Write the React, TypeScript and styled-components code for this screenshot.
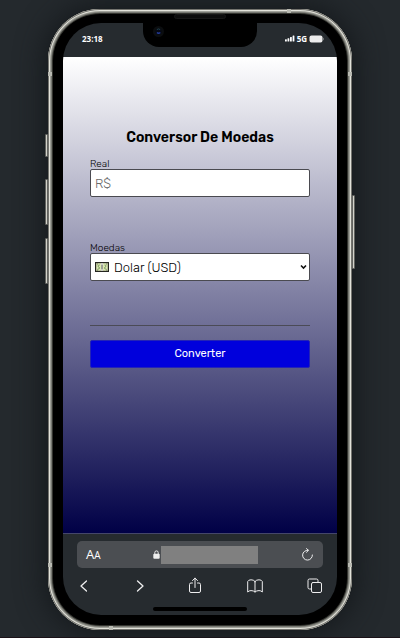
import React, { useState } from "react";
import styled, { createGlobalStyle } from "styled-components";

const GlobalStyle = createGlobalStyle`
  *, *::before, *::after { box-sizing: border-box; }
  body { margin: 0; background: #24292d; font-family: Rubik, Roboto, "Liberation Sans", sans-serif; }
  button, input, select { font: inherit; margin: 0; }
`;

const Page = styled.div`
  min-height: 100vh;
  display: flex;
  padding: 9px 48px 7px;
  border-bottom: 1px solid #1b1218;
  background: #24292d;
`;

const Phone = styled.div`
  position: relative;
  flex: 1;
  display: flex;
  padding: 14px 15px 15px;
  border-radius: 52px;
  background: #000;
  box-shadow:
    inset 0 0 0 1px #73736e,
    inset 0 0 0 2px #e2e2da,
    inset 0 0 0 3px #a0a199,
    inset 0 0 0 4px #777872,
    inset 0 0 0 5px #33342f,
    0 0 28px 4px #15191c;
`;

const SideButton = styled.span<{ $side: "left" | "right"; $top: number; $length: number }>`
  position: absolute;
  ${({ $side }) => $side}: -3px;
  top: ${({ $top }) => $top}px;
  width: 3px;
  height: ${({ $length }) => $length}px;
  border: 1px solid #62635f;
  border-radius: 1px;
  background: #d2d2ca;
`;

const Antenna = styled.span<{ $edge: "left" | "right" | "top" | "bottom"; $from: "top" | "bottom" | "left" | "right"; $at: number }>`
  position: absolute;
  ${({ $edge }) => $edge}: 0;
  ${({ $from }) => $from}: ${({ $at }) => $at}px;
  width: 4px;
  height: 4px;
  background: #b9bab2;
`;

const Speaker = styled.span`
  position: absolute;
  top: 5px;
  left: 50%;
  width: 52px;
  height: 5px;
  margin-left: -26px;
  border: 1px solid #161616;
  border-radius: 3px;
  background: #0c0c0c;
`;

const Screen = styled.div`
  flex: 1;
  min-width: 0;
  display: flex;
  flex-direction: column;
  overflow: hidden;
  border-radius: 38px;
  background: #262b2f;
`;

const StatusBar = styled.header`
  position: relative;
  height: 34px;
  display: flex;
  align-items: center;
  justify-content: space-between;
  padding: 0 13px 3px 19px;
  color: #fff;
  font: bold 8px/12px "Open Sans", sans-serif;
`;

const Notch = styled.div`
  position: absolute;
  top: 0;
  left: 50%;
  width: 114px;
  height: 24px;
  margin-left: -57px;
  border-radius: 0 0 16px 16px;
  background: #000;
`;

const Camera = styled.svg`
  position: absolute;
  left: 9px;
  top: 2px;
`;

const Signals = styled.div`
  display: flex;
  align-items: center;
  gap: 2px;
`;

const Content = styled.main`
  flex: 1;
  padding: 70px 27px 0;
  background: linear-gradient(#fff, #000046);
  border-bottom: 1px solid #44466a;
`;

const Title = styled.h1`
  margin: 0 0 11px;
  font-size: 14px;
  font-weight: 600;
  line-height: 21px;
  text-align: center;
  color: #000;
`;

const Field = styled.div`
  display: flex;
  flex-direction: column;
  margin-bottom: 46px;
`;

const Label = styled.label`
  font-size: 10px;
  font-weight: 300;
  line-height: 10px;
  color: #000;
`;

const MoneyInput = styled.input`
  width: 100%;
  height: 28px;
  padding: 0 4px;
  border: 1px solid #4a4a50;
  border-radius: 2px;
  background: #fff;
  color: #000;
  font-size: 13px;
  font-weight: 300;
  &::placeholder { color: #6a6a6a; opacity: 1; }
`;

const SelectBox = styled.div`
  position: relative;
`;

const CurrencySelect = styled.select`
  display: block;
  width: 100%;
  height: 28px;
  padding: 0 18px 0 23px;
  appearance: none;
  border: 1px solid #4a4a50;
  border-radius: 2px;
  background: #fff;
  color: #000;
  font-size: 13px;
  font-weight: 300;
`;

const NoteIcon = styled.svg`
  position: absolute;
  left: 5px;
  top: 9px;
  pointer-events: none;
`;

const Chevron = styled.svg`
  position: absolute;
  right: 3px;
  top: 11px;
  pointer-events: none;
`;

const Divider = styled.hr`
  margin: -2px 0 14px;
  border: 0;
  border-top: 1px solid #4b4b56;
`;

const ConvertButton = styled.button`
  display: block;
  width: 100%;
  height: 28px;
  padding: 0 0 1px;
  border: 1px solid #2424b4;
  border-radius: 2px;
  background: #0000dc;
  color: #fff;
  font-size: 11px;
  font-weight: 400;
`;

const BrowserBar = styled.footer`
  display: flex;
  flex-direction: column;
  padding: 7px 14px 4px;
`;

const AddressBar = styled.div`
  display: flex;
  align-items: center;
  justify-content: space-between;
  height: 27px;
  padding: 0 8px 0 9px;
  border-radius: 5px;
  background: #4b4e52;
`;

const Address = styled.div`
  display: flex;
  align-items: center;
  gap: 1px;
  margin-left: 9px;
`;

const AddressText = styled.span`
  width: 97px;
  height: 18px;
  background: #808080;
`;

const BareButton = styled.button`
  display: flex;
  align-items: center;
  justify-content: center;
  padding: 0;
  border: 0;
  background: none;
  color: #eeeeef;
`;

const TextSizeButton = styled(BareButton)`
  align-items: baseline;
  font: 13px/18px "Open Sans", sans-serif;
  color: #fff;
  small { font-size: 10px; }
`;

const Tools = styled.nav`
  display: flex;
  align-items: center;
  justify-content: space-between;
  height: 35px;
`;

const HomeIndicator = styled.div`
  width: 94px;
  height: 4px;
  margin: 4px auto 0;
  border-radius: 2px;
  background: #000;
`;

const stroke = { fill: "none", stroke: "currentColor", strokeLinecap: "round", strokeLinejoin: "round" } as const;

export default function App() {
  const [amount, setAmount] = useState("");
  return (
    <>
      <GlobalStyle />
      <Page>
        <Phone>
          <SideButton $side="left" $top={125} $length={23} />
          <SideButton $side="left" $top={170} $length={46} />
          <SideButton $side="left" $top={229} $length={46} />
          <SideButton $side="right" $top={186} $length={74} />
          <Antenna $edge="left" $from="top" $at={63} />
          <Antenna $edge="right" $from="top" $at={63} />
          <Antenna $edge="left" $from="bottom" $at={63} />
          <Antenna $edge="right" $from="bottom" $at={63} />
          <Antenna $edge="top" $from="right" $at={61} />
          <Antenna $edge="bottom" $from="left" $at={61} />
          <Speaker />
          <Screen>
            <StatusBar>
              <span>23:18</span>
              <Notch>
                <Camera width="13" height="13" viewBox="0 0 13 13" aria-hidden="true">
                  <circle cx="6.5" cy="6.5" r="5.5" fill="#0b0d0f" />
                  <circle cx="6.5" cy="6.5" r="3" fill="#050814" />
                  <path d="M4.8 4.6Q6.5 3.2 8.2 4.6" fill="none" stroke="#21424a" />
                  <path d="M5 7.5Q6.5 9 8.3 7.5" fill="none" stroke="#243c9a" strokeWidth="1.5" />
                </Camera>
              </Notch>
              <Signals>
                <svg width="10" height="7" viewBox="0 0 10 7" fill="#fff" aria-hidden="true">
                  <rect x="0" y="4.3" width="1.8" height="2.2" rx=".5" />
                  <rect x="2.5" y="3.3" width="1.8" height="3.2" rx=".5" />
                  <rect x="5" y="2" width="1.8" height="4.5" rx=".5" />
                  <rect x="7.6" y="0.4" width="1.8" height="6.1" rx=".5" />
                </svg>
                <span>5G</span>
                <svg width="15" height="8" viewBox="0 0 15 8" fill="#ececec" aria-hidden="true">
                  <rect x="0.5" y="0.5" width="13" height="7" rx="2" />
                  <path d="M14 2.5Q15 4 14 5.5Z" />
                </svg>
              </Signals>
            </StatusBar>
            <Content>
              <Title>Conversor De Moedas</Title>
              <Field>
                <Label htmlFor="real">Real</Label>
                <MoneyInput id="real" placeholder="R$" value={amount} onChange={(e) => setAmount(e.target.value)} />
              </Field>
              <Field>
                <Label htmlFor="moedas">Moedas</Label>
                <SelectBox>
                  <CurrencySelect id="moedas" defaultValue="usd">
                    <option value="usd">Dolar (USD)</option>
                  </CurrencySelect>
                  <NoteIcon width="14" height="10" viewBox="0 0 14 10" aria-hidden="true">
                    <rect x=".6" y=".6" width="12.8" height="8.8" fill="#dce8b4" stroke="#25251f" strokeWidth="1.2" />
                    <path d="M4.8 3H3.5Q2.5 4 3.500 5H4Q5 6 4 7H2.700M9.500 3H10.500Q11.500 4 10.500 5H10Q9 6 10 7H11.300" fill="none" stroke="#78975a" strokeWidth=".9" />
                    <rect x="6" y="1" width="2" height="8" fill="#c9c9c3" />
                    <path d="M7 3V7M2 2H3M11 2H12M2 8H3M11 8H12" stroke="#55604a" strokeWidth=".8" />
                  </NoteIcon>
                  <Chevron width="7" height="6" viewBox="0 0 7 6" aria-hidden="true">
                    <path d="M1 1.5 3.5 4 6 1.5" fill="none" stroke="#111" strokeWidth="1.6" />
                  </Chevron>
                </SelectBox>
              </Field>
              <Divider />
              <ConvertButton type="button">Converter</ConvertButton>
            </Content>
            <BrowserBar>
              <AddressBar>
                <TextSizeButton type="button" aria-label="AA">A<small>A</small></TextSizeButton>
                <Address>
                  <svg width="7" height="9" viewBox="0 0 7 9" aria-hidden="true">
                    <path d="M1.8 4V2.6a1.7 1.7 0 0 1 3.4 0V4" fill="none" stroke="#eee" />
                    <rect x=".3" y="3.8" width="6.4" height="5" rx="1" fill="#eee" />
                  </svg>
                  <AddressText />
                </Address>
                <BareButton type="button" aria-label="Recarregar">
                  <svg width="14" height="14" viewBox="0 0 14 14" {...stroke}>
                    <path d="M7 2.3A4.9 4.9 0 1 0 11.4 7" />
                    <path d="M5.5 .6 7.5 2.3 5.5 4.3" />
                  </svg>
                </BareButton>
              </AddressBar>
              <Tools>
                <BareButton type="button" aria-label="Voltar">
                  <svg width="14" height="14" viewBox="0 0 14 14" {...stroke} strokeWidth="1.3"><path d="M9.500 2 4 7l5.500 5" /></svg>
                </BareButton>
                <BareButton type="button" aria-label="Avançar">
                  <svg width="8" height="14" viewBox="0 0 8 14" {...stroke} strokeWidth="1.3"><path d="M1.500 2 7 7l-5.500 5" /></svg>
                </BareButton>
                <BareButton type="button" aria-label="Compartilhar">
                  <svg width="14" height="18" viewBox="0 0 14 18" {...stroke}>
                    <path d="M4.500 6H3Q1.500 6 1.500 7.500V14Q1.500 15.500 3 15.500H11Q12.500 15.500 12.500 14V7.500Q12.500 6 11 6H9.500M7 10.500V1.200M4.500 3.500 7 1.200 9.500 3.500" />
                  </svg>
                </BareButton>
                <BareButton type="button" aria-label="Favoritos">
                  <svg width="16" height="14" viewBox="0 0 16 14" {...stroke}>
                    <path d="M8 2.500Q6.500.6 4 .8 1.500.8.7 2.500V13Q2 11.600 4 11.600 6.500 11.600 8 13 9.500 11.600 12 11.600 14 11.600 15.300 13V2.500Q14.500.8 12 .8 9.500.6 8 2.500ZM8 2.500V13" />
                  </svg>
                </BareButton>
                <BareButton type="button" aria-label="Abas">
                  <svg width="16" height="16" viewBox="0 0 16 16" {...stroke}>
                    <rect x="4.500" y="4.500" width="10" height="10" rx="1.500" />
                    <path d="M4.500 11H2.500Q1 11 1 9.500V2.500Q1 1 2.500 1H9.500Q11 1 11 2.500V4.500" />
                  </svg>
                </BareButton>
              </Tools>
              <HomeIndicator />
            </BrowserBar>
          </Screen>
        </Phone>
      </Page>
    </>
  );
}
